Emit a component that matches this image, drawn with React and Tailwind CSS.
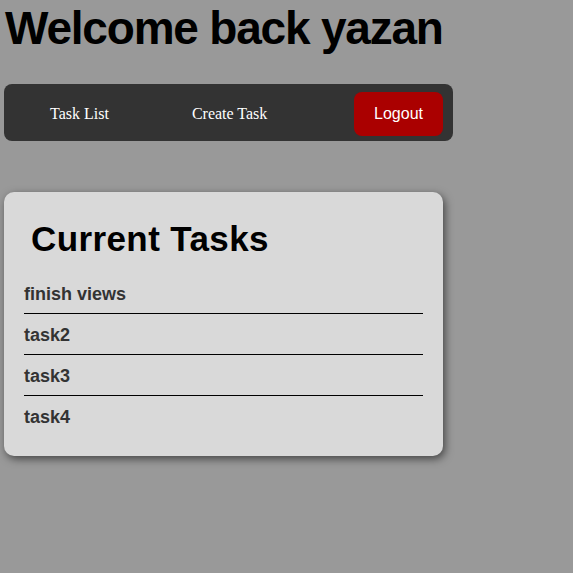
export default function App() {
  const tasks = ["finish views", "task2", "task3", "task4"];
  return (
    <div className="min-h-[573px] w-full bg-[#999999] pt-0" style={{ fontFamily: '"Liberation Sans", Arial, sans-serif' }}>
      <h1 className="m-0 pl-[5px] pt-[1px] text-[46px] font-bold leading-[54px] tracking-[-1.2px] text-black">
        Welcome back yazan
      </h1>
      <nav className="ml-[4px] mt-[29px] flex h-[57px] w-[449px] items-start rounded-[8px] bg-[#333333] pl-[46px] pr-[10px] pt-[8px]">
        <a className="flex h-[44px] items-center text-[16px] text-white" style={{ fontFamily: '"Liberation Serif", "Times New Roman", serif' }}>
          Task List
        </a>
        <a className="ml-[83px] flex h-[44px] items-center text-[16px] text-white" style={{ fontFamily: '"Liberation Serif", "Times New Roman", serif' }}>
          Create Task
        </a>
        <button className="ml-auto flex h-[44px] w-[89px] items-center justify-center rounded-[8px] bg-[#aa0000] text-[16px] text-white">
          Logout
        </button>
      </nav>
      <div className="ml-[4px] mt-[51px] w-[439px] rounded-[10px] bg-[#d9d9d9] px-[20px] pb-[20px] pt-[28px] shadow-[2px_3px_8px_rgba(0,0,0,0.55)]">
        <h2 className="mb-[16px] pl-[7px] text-[35px] font-bold leading-[37px] tracking-[0.4px] text-black">Current Tasks</h2>
        <ul>
          {tasks.map((t, i) => (
            <li
              key={t}
              className={
                i < tasks.length - 1
                  ? "border-b border-black pb-[9px] pt-[11px] text-[18px] font-bold leading-[20px] text-[#333333]"
                  : "pb-[9px] pt-[11px] text-[18px] font-bold leading-[20px] text-[#333333]"
              }
            >
              {t}
            </li>
          ))}
        </ul>
      </div>
    </div>
  );
}
